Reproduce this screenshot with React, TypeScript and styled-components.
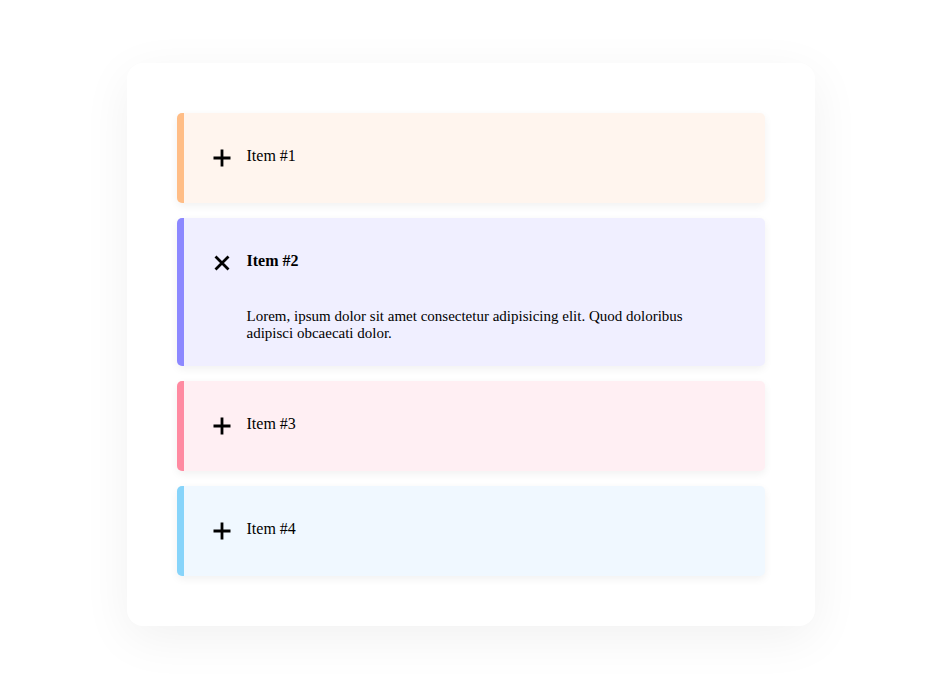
import React, { useState } from "react";
import styled, { createGlobalStyle } from "styled-components";

const Global = createGlobalStyle`
  html, body {
    margin: 0;
    padding: 0;
    background: #ffffff;
    font-family: "Liberation Serif", "Times New Roman", serif;
    font-size: 16px;
    color: #000;
  }
`;

const Page = styled.div`
  display: flex;
  justify-content: center;
  align-items: flex-start;
  box-sizing: border-box;
  min-height: 100vh;
  padding: 63px 0 68px;
`;

const Card = styled.div`
  width: 688px;
  box-sizing: border-box;
  padding: 50px;
  background: #fff;
  border-radius: 16px;
  box-shadow: 0 12px 50px rgba(0, 0, 0, 0.06);
  display: flex;
  flex-direction: column;
  gap: 15px;
`;

const Item = styled.div<{ $bg: string; $bar: string }>`
  background: ${(p) => p.$bg};
  border-left: 7px solid ${(p) => p.$bar};
  border-radius: 5px;
  box-shadow: 0 3px 8px rgba(0, 0, 0, 0.06);
`;

const Header = styled.button`
  all: unset;
  display: flex;
  align-items: center;
  gap: 16px;
  height: 90px;
  box-sizing: border-box;
  padding: 0 0 0 29px;
  cursor: pointer;
  width: 100%;
`;

const IconBox = styled.span`
  width: 18px;
  height: 18px;
  display: flex;
  align-items: center;
  justify-content: center;
  margin-top: 0px;
`;

const Title = styled.span<{ $open: boolean }>`
  font-family: "Liberation Serif", "Times New Roman", serif;
  font-size: 16px;
  font-weight: ${(p) => (p.$open ? 700 : 400)};
  line-height: 18px;
  margin-top: -5px;
`;

const Body = styled.p`
  margin: 0;
  padding: 0 60px 24px 63px;
  font-size: 15px;
  line-height: 17px;
`;

const Plus = () => (
  <svg width="18" height="18" viewBox="0 0 18 18">
    <path d="M9 0.5V17.5M0.5 9H17.5" stroke="#000" strokeWidth="2.8" fill="none" />
  </svg>
);

const Cross = () => (
  <svg width="18" height="18" viewBox="0 0 18 18">
    <path d="M2.5 2.5L15.5 15.5M15.5 2.5L2.5 15.5" stroke="#000" strokeWidth="2.8" fill="none" />
  </svg>
);

const items = [
  { title: "Item #1", bg: "#fff5ee", bar: "#ffbd86" },
  { title: "Item #2", bg: "#f0efff", bar: "#8c88ff" },
  { title: "Item #3", bg: "#ffeff3", bar: "#ff8aa1" },
  { title: "Item #4", bg: "#f0f8ff", bar: "#87d4fa" },
];

export default function App() {
  const [open, setOpen] = useState<number>(1);
  return (
    <>
      <Global />
      <Page>
        <Card>
          {items.map((it, i) => {
            const isOpen = open === i;
            return (
              <Item key={it.title} $bg={it.bg} $bar={it.bar}>
                <Header onClick={() => setOpen(isOpen ? -1 : i)}>
                  <IconBox>{isOpen ? <Cross /> : <Plus />}</IconBox>
                  <Title $open={isOpen}>{it.title}</Title>
                </Header>
                {isOpen && (
                  <Body>
                    Lorem, ipsum dolor sit amet consectetur adipisicing elit. Quod doloribus
                    adipisci obcaecati dolor.
                  </Body>
                )}
              </Item>
            );
          })}
        </Card>
      </Page>
    </>
  );
}
